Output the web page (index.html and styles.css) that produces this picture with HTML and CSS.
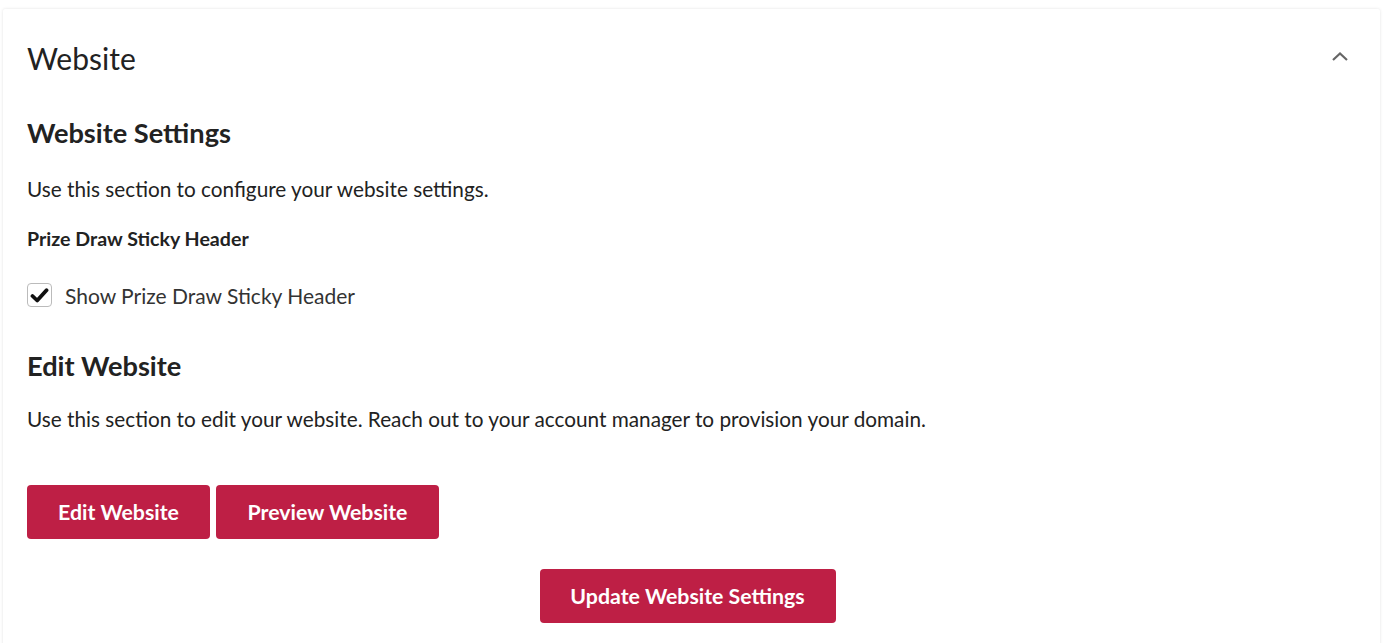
FILE: index.html
```html
<!DOCTYPE html>
<html lang="en">
<head>
<meta charset="utf-8">
<title>Website</title>
<link rel="stylesheet" href="styles.css">
</head>
<body>
<section class="card">
  <header class="card-header">
    <h1 class="card-title">Website</h1>
    <svg class="chevron" width="18" height="12" viewBox="0 0 18 12" aria-hidden="true">
      <path d="M2 9 L9 2.5 L16 9" fill="none" stroke="#666" stroke-width="2.2"/>
    </svg>
  </header>
  <div class="card-body">
    <h2 class="section-title">Website Settings</h2>
    <p class="text">Use this section to configure your website settings.</p>
    <h3 class="field-label">Prize Draw Sticky Header</h3>
    <label class="check-row">
      <span class="checkbox">
        <svg width="19" height="17" viewBox="0 0 19 17" aria-hidden="true">
          <path d="M2.5 9 L7.2 13.5 L16.5 3.2" fill="none" stroke="#111" stroke-width="3.8" stroke-linecap="round" stroke-linejoin="round"/>
        </svg>
      </span>
      <span class="check-text">Show Prize Draw Sticky Header</span>
    </label>
    <h2 class="section-title second">Edit Website</h2>
    <p class="text second">Use this section to edit your website. Reach out to your account manager to provision your domain.</p>
    <div class="btn-row">
      <button class="btn btn-edit">Edit Website</button>
      <button class="btn btn-preview">Preview Website</button>
    </div>
    <div class="footer">
      <button class="btn btn-update">Update Website Settings</button>
    </div>
  </div>
</section>
</body>
</html>
```
FILE: styles.css
```css
* { box-sizing: border-box; }
html, body { margin: 0; padding: 0; background: #ffffff; }
body {
  font-family: Lato, "Open Sans", sans-serif;
  color: #222;
  padding: 9px 6px 0 3px;
  height: 643px;
  overflow: hidden;
}
.card {
  background: #fff;
  box-shadow: 0 0 3px rgba(0,0,0,0.12);
  border-radius: 2px;
  min-height: 640px;
}
.card-header {
  display: flex;
  align-items: center;
  justify-content: space-between;
  padding: 0 31px 0 24px;
  height: 98px;
}
.card-title {
  margin: 0;
  font-size: 30px;
  font-weight: 400;
  color: #222;
  line-height: 1;
}
.chevron { display: block; margin-top: -2px; }
.card-body { padding: 0 24px; }
.section-title {
  margin: 10px 0 0;
  font-size: 27.2px;
  font-weight: 700;
  line-height: 32px;
  color: #222;
}
.section-title.second { margin-top: 43px; }
.text {
  margin: 28px 0 0;
  font-size: 20.75px;
  line-height: 25px;
  color: #222;
}
.text.second { margin-top: 25px; }
.field-label {
  margin: 25px 0 0;
  font-size: 19.6px;
  font-weight: 700;
  line-height: 24px;
}
.check-row {
  display: flex;
  align-items: center;
  gap: 13px;
  margin-top: 32px;
  height: 24px;
}
.checkbox {
  width: 25px;
  height: 24px;
  border: 1px solid #bbb;
  border-radius: 4px;
  display: flex;
  align-items: center;
  justify-content: center;
}
.checkbox svg { display: block; }
.check-text { font-size: 21px; color: #333; }
.btn-row {
  display: flex;
  gap: 6px;
  margin-top: 53px;
}
.btn {
  font-family: Lato, "Open Sans", sans-serif;
  background: #be1f45;
  color: #fff;
  border: none;
  border-radius: 4px;
  height: 54px;
  font-size: 21.3px;
  font-weight: 700;
  padding: 0;
}
.btn-edit { width: 183px; }
.btn-preview { width: 223px; }
.footer {
  display: flex;
  justify-content: center;
  margin-top: 30px;
}
.btn-update { width: 296px; margin-left: -8px; }
```
